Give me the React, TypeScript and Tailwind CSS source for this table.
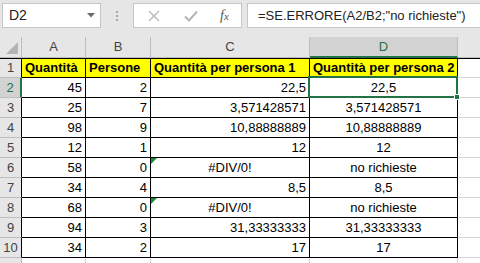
import { type ReactNode } from "react";

type Row = [string, string, string, string];

const rows: Row[] = [
  ["45", "2", "22,5", "22,5"],
  ["25", "7", "3,571428571", "3,571428571"],
  ["98", "9", "10,88888889", "10,88888889"],
  ["12", "1", "12", "12"],
  ["58", "0", "#DIV/0!", "no richieste"],
  ["34", "4", "8,5", "8,5"],
  ["68", "0", "#DIV/0!", "no richieste"],
  ["94", "3", "31,33333333", "31,33333333"],
  ["34", "2", "17", "17"],
];

const font = { fontFamily: '"Liberation Sans", Arial, sans-serif' };

function ErrorMark() {
  return (
    <svg className="absolute left-0 top-0" width="6" height="6" viewBox="0 0 6 6">
      <polygon points="0,0 6,0 0,6" fill="#1e8a3c" />
    </svg>
  );
}

function Cell({
  children,
  w,
  align = "right",
  extra = "",
}: {
  children?: ReactNode;
  w: string;
  align?: "left" | "right" | "center";
  extra?: string;
}) {
  const a =
    align === "left" ? "justify-start pl-[3px]" : align === "center" ? "justify-center" : "justify-end pr-[3px]";
  return (
    <div className={`relative flex h-full shrink-0 items-center border-r border-b border-black ${a} ${w} ${extra}`}>
      {children}
    </div>
  );
}

export default function App() {
  return (
    <div className="h-[263px] w-[480px] overflow-hidden bg-white text-[13px] text-black" style={font}>
      {/* formula bar */}
      <div className="flex h-[37px] items-start bg-[#e6e6e6] pt-[3px]">
        <div className="ml-[2px] flex h-[25px] w-[99px] items-center justify-between border border-[#c6c6c6] bg-white pl-[6px] pr-[5px]">
          <span className="text-[14px] text-[#222]">D2</span>
          <svg width="8" height="5" viewBox="0 0 8 5">
            <polygon points="0,0 8,0 4,4.5" fill="#6b6b6b" />
          </svg>
        </div>
        <div className="flex h-[25px] w-[32px] flex-col items-center justify-center gap-[2px]">
          <span className="h-[2px] w-[2px] bg-[#a8a8a8]" />
          <span className="h-[2px] w-[2px] bg-[#a8a8a8]" />
          <span className="h-[2px] w-[2px] bg-[#a8a8a8]" />
        </div>
        <div className="flex h-[25px] w-[109px] items-center border border-[#c6c6c6] bg-white">
          <svg className="ml-[14px]" width="12" height="12" viewBox="0 0 12 12">
            <path d="M1 1 L11 11 M11 1 L1 11" stroke="#b5b5b5" strokeWidth="1.3" />
          </svg>
          <svg className="ml-[24px]" width="14" height="12" viewBox="0 0 14 12">
            <path d="M1 6.5 L5 10.5 L13 1.5" stroke="#b5b5b5" strokeWidth="2" fill="none" />
          </svg>
          <span
            className="ml-[22px] text-[14px] italic text-[#555]"
            style={{ fontFamily: '"Liberation Serif", "Times New Roman", serif' }}
          >
            f<span className="text-[11px]">x</span>
          </span>
        </div>
        <div className="ml-[5px] flex h-[25px] flex-1 items-center border-y border-l border-[#c6c6c6] bg-white pl-[10px]">
          <span className="text-[13px] text-[#222]">=SE.ERRORE(A2/B2;"no richieste")</span>
        </div>
      </div>

      {/* column headers */}
      <div className="flex h-[21px] bg-[#e6e6e6] text-[13px] text-[#444]">
        <div className="relative h-full w-[22px] shrink-0 border-r border-b border-[#bdbdbd]">
          <svg className="absolute bottom-[3px] right-[3px]" width="12" height="12" viewBox="0 0 12 12">
            <polygon points="12,0 12,12 0,12" fill="#b4b4b4" />
          </svg>
        </div>
        <div className="flex w-[64px] shrink-0 items-center justify-center border-r border-b border-[#bdbdbd]">A</div>
        <div className="flex w-[65px] shrink-0 items-center justify-center border-r border-b border-[#bdbdbd]">B</div>
        <div className="flex w-[159px] shrink-0 items-center justify-center border-r border-b border-[#bdbdbd]">C</div>
        <div className="flex w-[148px] shrink-0 items-center justify-center border-r border-b-2 border-r-[#bdbdbd] border-b-[#217346] bg-[#d2d2d2] pt-[1px] text-[#217346]">
          D
        </div>
        <div className="flex-1 border-b border-[#bdbdbd]" />
      </div>

      {/* header row */}
      <div className="flex h-[20px] border-t border-black">
        <div className="flex h-full w-[22px] shrink-0 items-center justify-center border-r border-b border-r-black border-b-[#bdbdbd] bg-[#e6e6e6] text-[#444]">
          1
        </div>
        <Cell w="w-[64px]" align="left" extra="bg-[#ffff00] font-bold">Quantità</Cell>
        <Cell w="w-[65px]" align="left" extra="bg-[#ffff00] font-bold">Persone</Cell>
        <Cell w="w-[159px]" align="left" extra="bg-[#ffff00] font-bold">Quantità per persona 1</Cell>
        <Cell w="w-[148px]" align="left" extra="bg-[#ffff00] font-bold">Quantità per persona 2</Cell>
        <div className="h-full flex-1 border-b border-[#d4d4d4]" />
      </div>

      {rows.map((r, i) => {
        const n = i + 2;
        const active = n === 2;
        const isErr = r[2].startsWith("#");
        return (
          <div key={n} className="flex h-[20px]">
            <div
              className={`flex h-full w-[22px] shrink-0 items-center justify-center border-b border-b-[#bdbdbd] ${
                active
                  ? "border-r-2 border-r-[#217346] bg-[#d2d2d2] text-[#217346]"
                  : "border-r border-r-black bg-[#e6e6e6] text-[#444]"
              }`}
            >
              {n}
            </div>
            <Cell w="w-[64px]">{r[0]}</Cell>
            <Cell w="w-[65px]">{r[1]}</Cell>
            <Cell w="w-[159px]" align={isErr ? "center" : "right"}>
              {isErr && <ErrorMark />}
              {r[2]}
            </Cell>
            <Cell w="w-[148px]" align="center" extra={active ? "z-10" : ""}>
              {active && (
                <div className="pointer-events-none absolute -left-[2px] -top-[2px] h-[22px] w-[150px] border-2 border-[#217346]">
                  <div className="absolute -bottom-[4px] -right-[4px] h-[6px] w-[6px] border border-white bg-[#217346]" />
                </div>
              )}
              {r[3]}
            </Cell>
            <div className="h-full flex-1 border-b border-[#d4d4d4]" />
          </div>
        );
      })}

      {/* next row, mostly below the fold */}
      <div className="flex h-[20px]">
        <div className="h-full w-[22px] shrink-0 border-r border-[#bdbdbd] bg-[#e6e6e6]" />
        <div className="h-full w-[64px] shrink-0 border-r border-[#d4d4d4]" />
        <div className="h-full w-[65px] shrink-0 border-r border-[#d4d4d4]" />
        <div className="h-full w-[159px] shrink-0 border-r border-[#d4d4d4]" />
        <div className="h-full w-[148px] shrink-0 border-r border-[#d4d4d4]" />
        <div className="h-full flex-1" />
      </div>
    </div>
  );
}
